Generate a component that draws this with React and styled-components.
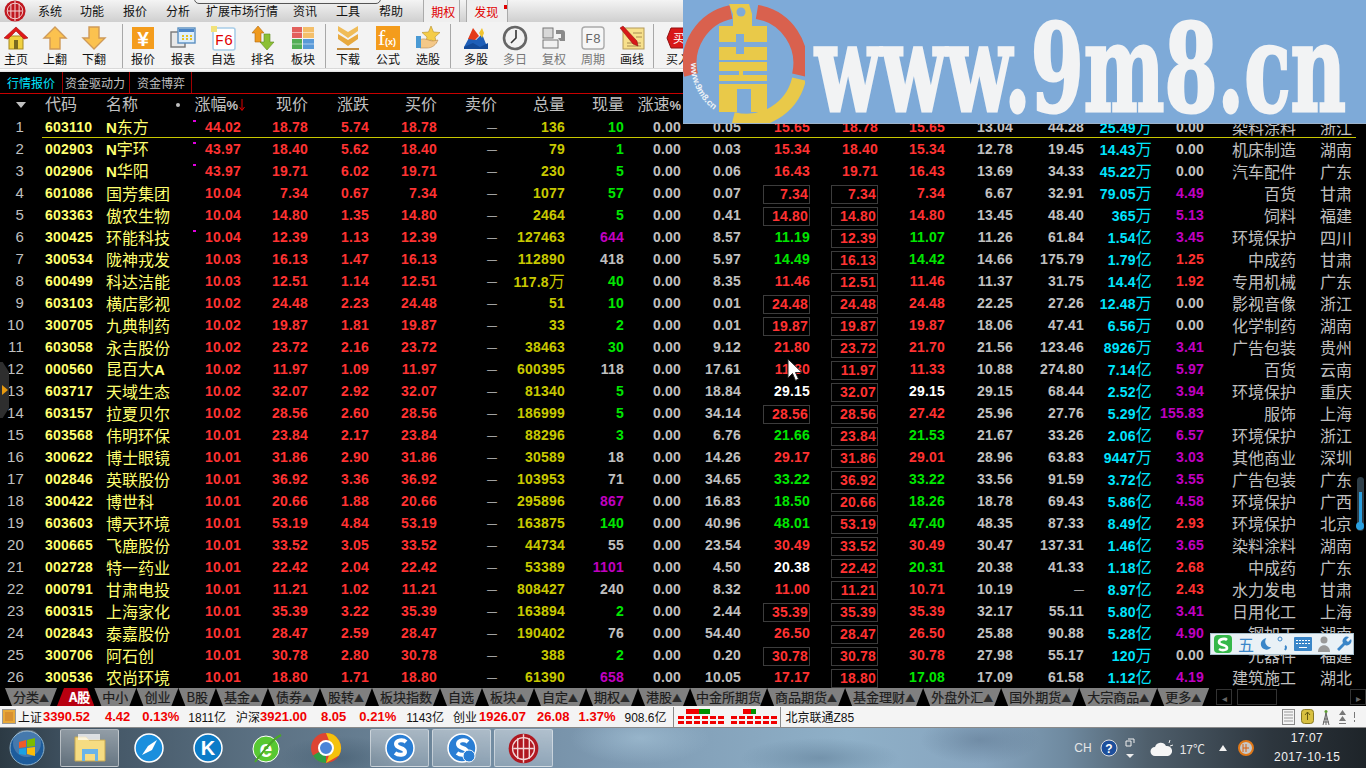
import React from "react";
import styled, { createGlobalStyle } from "styled-components";

const CJK = `"Noto Sans CJK SC", sans-serif`;
const NUM = `"Liberation Sans", "Noto Sans CJK SC", sans-serif`;
const GRAY = "#c0c0c0";
const RED = "#ff3232";
const GREEN = "#00e600";
const MAGENTA = "#c000c0";
const CYAN = "#00e5ff";

const GlobalStyle = createGlobalStyle`
    html, body {
        margin: 0;
        background: #000;
        overflow: hidden;
    }
`;

const Shell = styled.div`
    position: relative;
    width: 1366px;
    height: 768px;
    overflow: hidden;
    display: flex;
    flex-direction: column;
    background: #000;
    font-family: ${CJK};
`;

/* ---------- top menu ---------- */

const MenuBar = styled.div`
    position: relative;
    height: 22px;
    display: flex;
    align-items: center;
    background: linear-gradient(#f4f4f4, #cfcfcf);
    flex-shrink: 0;

    &::before {
        content: "";
        position: absolute;
        left: 194px;
        top: -3px;
        width: 185px;
        height: 5px;
        border: 1px solid #555;
        border-radius: 0 0 5px 5px;
    }
`;

const MenuLogo = styled.div`
    width: 38px;
    display: flex;
    padding-left: 4px;
    box-sizing: border-box;
`;

const MenuItem = styled.span`
    font-size: 12px;
    line-height: 22px;
    color: #111;
    margin-right: ${(p) => p.$gap}px;
`;

const MenuTab = styled.div`
    display: flex;
    align-items: center;
    height: 22px;
    width: ${(p) => p.$w}px;
    margin-left: ${(p) => p.$ml}px;
    padding-left: 7px;
    box-sizing: border-box;
    border-left: 1px solid #aaa;
    border-right: 1px solid #aaa;
    background: #efefef;
    font-size: 12px;
    color: #e00000;
`;

const RedDot = styled.span`
    width: 3px;
    height: 4px;
    margin: -8px 0 0 6px;
    background: #e00000;
`;

/* ---------- toolbar ---------- */

const ToolBar = styled.div`
    height: 46px;
    display: flex;
    padding-top: 2px;
    box-sizing: border-box;
    background: #f3f3f3;
    flex-shrink: 0;
`;

const ToolStrip = styled.div`
    height: 4px;
    flex-shrink: 0;
    background: linear-gradient(#c8c8c8, #fff 40%, #dcdcdc);
`;

const ToolGroup = styled.div`
    display: flex;
    gap: ${(p) => p.$gap}px;
    padding: 1px ${(p) => p.$pr}px 0 ${(p) => p.$pl}px;
    border-right: ${(p) => (p.$last ? "none" : "1px solid #a8a8a8")};
`;

const ToolButton = styled.div`
    width: 32px;
    display: flex;
    flex-direction: column;
    align-items: center;
    color: ${(p) => (p.$dim ? "#777" : "#111")};
    font-size: 12px;
    line-height: 15px;
    white-space: nowrap;
`;

const svgBox = { width: 26, height: 26, viewBox: "0 0 26 26" };

const icons = {
    home: (
        <svg {...svgBox}>
            <rect x="6" y="11" width="14" height="13" fill="#f0d040" stroke="#a88a20" />
            <polygon points="13,2 25,13 21,14 13,6 5,14 1,13" fill="#e01818" stroke="#a01010" strokeWidth=".6" />
            <rect x="11" y="15" width="4" height="9" fill="#7a6a20" />
        </svg>
    ),
    up: (
        <svg {...svgBox}>
            <polygon points="13,2 24,13 18,13 18,24 8,24 8,13 2,13" fill="#fbc24f" stroke="#cf9a58" strokeWidth="1.4" />
        </svg>
    ),
    down: (
        <svg {...svgBox}>
            <polygon points="8,2 18,2 18,13 24,13 13,24 2,13 8,13" fill="#fbc24f" stroke="#cf9a58" strokeWidth="1.4" />
        </svg>
    ),
    yuan: (
        <svg {...svgBox}>
            <rect x="2" y="2" width="22" height="22" fill="#f49c1c" />
            <text x="13" y="21" textAnchor="middle" fontFamily="Liberation Sans" fontWeight="700" fontSize="21" fill="#fff">¥</text>
        </svg>
    ),
    report: (
        <svg {...svgBox}>
            <rect x="1" y="7" width="14" height="15" fill="#e8e8e8" stroke="#777" strokeWidth="1.4" />
            <rect x="8" y="3" width="17" height="15" fill="#dceefc" stroke="#5b8fc0" strokeWidth="1.4" />
            <rect x="9" y="4" width="15" height="3" fill="#4c86c8" />
            <path d="M12 11h2M16 11h2M20 11h2M12 14h2M16 14h2M20 14h2" stroke="#e8c020" strokeWidth="2" />
        </svg>
    ),
    f6: (
        <svg {...svgBox}>
            <rect x="3" y="3" width="22" height="22" rx="2" fill="#fff" stroke="#a8cde8" strokeWidth="1.6" />
            <rect x="1" y="1" width="6" height="6" fill="#f2e27a" />
            <text x="14" y="20" textAnchor="middle" fontFamily="Liberation Mono" fontSize="15" fill="#e00000">F6</text>
        </svg>
    ),
    rank: (
        <svg {...svgBox}>
            <polygon points="8,1 14,8 11,8 11,17 5,17 5,8 2,8" fill="#ef9a1e" stroke="#b06a10" strokeWidth=".6" />
            <polygon points="14,9 20,9 20,17 24,17 17,25 10,17 14,17" fill="#8cc034" stroke="#5f8a20" strokeWidth=".6" />
        </svg>
    ),
    blocks: (
        <svg {...svgBox}>
            <rect x="2" y="2" width="10" height="11" fill="#e2605c" />
            <rect x="13" y="2" width="11" height="11" fill="#f4bf6a" />
            <rect x="2" y="14" width="10" height="10" fill="#52ae55" />
            <rect x="13" y="14" width="11" height="10" fill="#5a9ad8" />
            <path d="M2 7.5h10M2 19h10M13 7.5h11M13 19h11" stroke="#fff" strokeOpacity=".5" />
        </svg>
    ),
    download: (
        <svg {...svgBox}>
            <polygon points="3,1 13,7 23,1 23,6 13,13 3,6" fill="#f0bc58" />
            <polygon points="3,9 13,15 23,9 23,14 13,21 3,14" fill="#e8a93e" />
            <rect x="2" y="23" width="22" height="2" fill="#c89040" />
        </svg>
    ),
    fx: (
        <svg {...svgBox}>
            <rect x="1" y="1" width="24" height="24" fill="#f49c1c" />
            <text x="3" y="20" fontFamily="Liberation Serif" fontSize="22" fill="#fff">f</text>
            <text x="10" y="20" fontFamily="Liberation Sans" fontWeight="700" fontSize="9" fill="#fff">(x)</text>
        </svg>
    ),
    star: (
        <svg {...svgBox}>
            <polygon points="16,1 18.5,7 25,7.5 20,12 21.5,18 16,15 10.5,18 12,12 7,7.5 13.5,7" fill="#f4cc48" stroke="#b8902a" strokeWidth=".6" />
            <path d="M5 15c4-3 9 1 13 1l5-1c-2 5-6 8-11 8H5z" fill="#f4c888" stroke="#b88a50" strokeWidth=".6" />
            <rect x="1" y="11" width="5" height="12" fill="#4a9ad4" />
        </svg>
    ),
    multi: (
        <svg {...svgBox}>
            <polygon points="1,22 7,11 13,15 19,9 25,24 1,24" fill="#1e5fb8" />
            <polygon points="5,14 10,3 16,11 12,15" fill="#e43a1a" />
            <polygon points="16,8 19,3 21,8 19,13" fill="#f2c430" />
            <polygon points="1,22 10,18 17,22 25,18 25,24 1,24" fill="#134a98" />
        </svg>
    ),
    clock: (
        <svg {...svgBox}>
            <circle cx="13" cy="13" r="11" fill="#f2f2f2" stroke="#666" strokeWidth="2.6" />
            <path d="M14 5v8l-5 5" fill="none" stroke="#333" strokeWidth="1.6" />
        </svg>
    ),
    fq: (
        <svg {...svgBox}>
            <rect x="2" y="3" width="10" height="10" fill="#d8d8d8" stroke="#777" />
            <rect x="2" y="15" width="15" height="8" fill="#f0f0f0" stroke="#777" />
            <path d="M15 5h6a3 3 0 0 1 3 3v8h-5l-2-3h3V9h-5z" fill="#8a8a8a" />
        </svg>
    ),
    f8: (
        <svg {...svgBox}>
            <rect x="2" y="2" width="22" height="22" rx="3" fill="#f6f6f6" stroke="#aaa" strokeWidth="1.4" />
            <text x="13" y="18" textAnchor="middle" fontFamily="Liberation Mono" fontSize="13" fill="#666">F8</text>
        </svg>
    ),
    note: (
        <svg {...svgBox}>
            <rect x="4" y="3" width="21" height="21" fill="#f7e08c" stroke="#b49a58" />
            <path d="M8 18h14M8 21h14M14 8h9M17 12h6" stroke="#a88c50" />
            <polygon points="1,3 4,1 18,16 19,21 14,19" fill="#d81818" stroke="#801010" strokeWidth=".5" />
        </svg>
    ),
    buy: (
        <svg {...svgBox}>
            <polygon points="6,3 22,3 26,13 22,23 6,23 2,13" fill="#d81818" stroke="#901010" />
            <text x="14" y="18" textAnchor="middle" fontFamily={CJK} fontSize="12" fill="#fff">买</text>
        </svg>
    ),
};

const toolGroups = [
    { pl: 0, pr: 12, gap: 7, items: [["home", "主页"], ["up", "上翻"], ["down", "下翻"]] },
    { pl: 4, pr: 6, gap: 8, items: [["yuan", "报价"], ["report", "报表"], ["f6", "自选"], ["rank", "排名"], ["blocks", "板块"]] },
    { pl: 6, pr: 6, gap: 8, items: [["download", "下载"], ["fx", "公式"], ["star", "选股"]] },
    { pl: 9, pr: 5, gap: 7, items: [["multi", "多股"], ["clock", "多日", 1], ["fq", "复权", 1], ["f8", "周期", 1], ["note", "画线"]] },
    { pl: 8, pr: 0, gap: 7, last: true, items: [["buy", "买入"]] },
];

/* ---------- sheet tabs and table ---------- */

const SheetTabs = styled.div`
    height: 22px;
    box-sizing: border-box;
    display: flex;
    flex-shrink: 0;
    border-bottom: 1px solid #c80000;
`;

const SheetTab = styled.div`
    padding: 0 ${(p) => p.$pr}px 0 ${(p) => p.$pl}px;
    border-right: 1px solid #a00000;
    font-size: 12px;
    line-height: 21px;
    color: ${(p) => (p.$active ? CYAN : GRAY)};
`;

const columns = "24px 82px 84px 51px 67px 61px 68px 60px 68px 59px 57px 60px 69px 68px 67px 68px 71px 68px 52px 92px 56px";

const HeadRow = styled.div`
    display: grid;
    grid-template-columns: ${columns};
    height: 21px;
    flex-shrink: 0;
    align-items: start;
    color: ${GRAY};
    font-size: 16px;
    line-height: 19px;
`;

const HeadCell = styled.div`
    text-align: ${(p) => (p.$left ? "left" : "right")};
    padding-left: ${(p) => p.$pl || 0}px;
    white-space: nowrap;
    position: relative;
`;

const HeadPercent = styled.span`
    font-family: "Liberation Sans", sans-serif;
    font-weight: 700;
    font-size: 13px;
`;

const SortArrow = styled.svg`
    margin: 0 -4px 0 1px;
    vertical-align: -1px;
`;

const HeadDot = styled.i`
    position: absolute;
    right: 10px;
    top: 9px;
    width: 4px;
    height: 4px;
    border-radius: 50%;
    background: ${GRAY};
`;

const SortTriangle = styled.i`
    position: absolute;
    left: 16px;
    top: 8px;
    border: 5px solid transparent;
    border-bottom: none;
    border-top: 6px solid ${GRAY};
`;

const TableBody = styled.div`
    flex: 1;
    min-height: 0;
`;

const Row = styled.div`
    position: relative;
    display: grid;
    grid-template-columns: ${columns};
    height: 22px;
    align-items: center;

    ${(p) =>
        p.$selected &&
        `&::after {
            content: "";
            position: absolute;
            left: 42px;
            right: 10px;
            bottom: -1px;
            height: 1px;
            background: #c8c800;
        }`}
`;

const Num = styled.div`
    position: relative;
    text-align: right;
    font-family: ${NUM};
    font-size: 14px;
    font-weight: 700;
    letter-spacing: 0.2px;
    line-height: 22px;
    white-space: nowrap;
    color: ${(p) => p.$color || GRAY};

    ${(p) =>
        p.$mark &&
        `&::before {
            content: "";
            position: absolute;
            left: 3px;
            top: 4px;
            width: 3px;
            height: 2px;
            background: #e000e0;
        }`}
`;

const Index = styled(Num)`
    font-size: 15px;
    font-weight: 400;
`;

const Code = styled(Num)`
    text-align: left;
    padding-left: 21px;
    color: #ffff70;
`;

const Name = styled.div`
    font-family: ${CJK};
    font-size: 16px;
    line-height: 21px;
    color: #ffff70;
    white-space: nowrap;
`;

const NameLatin = styled.b`
    font-family: "Liberation Sans", sans-serif;
    font-size: 15px;
`;

const Place = styled.div`
    text-align: right;
    font-size: 16px;
    line-height: 21px;
    color: ${GRAY};
    white-space: nowrap;
`;

const Unit = styled.span`
    font-family: ${CJK};
    font-size: 16px;
    font-weight: 400;
`;

const Dash = styled.span`
    font-size: 10px;
    font-weight: 400;
    letter-spacing: 0;
`;

const Boxed = styled.span`
    display: inline-block;
    box-sizing: border-box;
    width: 47px;
    height: 19px;
    line-height: 17px;
    padding-right: 1px;
    border: 1px solid #3c3c3c;
    vertical-align: middle;
`;

const rows = [
    "603110|N东方|44.02|18.78|5.74|136|g10|0.05|15.65|18.78|15.65|13.04|44.28|25.49万|0.00|染料涂料|浙江|m",
    "002903|N宇环|43.97|18.40|5.62|79|g1|0.03|15.34|18.40|15.34|12.78|19.45|14.43万|0.00|机床制造|湖南|m",
    "002906|N华阳|43.97|19.71|6.02|230|g5|0.06|16.43|19.71|16.43|13.69|34.33|45.22万|0.00|汽车配件|广东|m",
    "601086|国芳集团|10.04|7.34|0.67|1077|g57|0.07|b7.34|b7.34|7.34|6.67|32.91|79.05万|4.49|百货|甘肃|",
    "603363|傲农生物|10.04|14.80|1.35|2464|g5|0.41|b14.80|b14.80|14.80|13.45|48.40|365万|5.13|饲料|福建|",
    "300425|环能科技|10.04|12.39|1.13|127463|m644|8.57|g11.19|b12.39|g11.07|11.26|61.84|1.54亿|3.45|环境保护|四川|m",
    "300534|陇神戎发|10.03|16.13|1.47|112890|418|5.97|g14.49|b16.13|g14.42|14.66|175.79|1.79亿|1.25|中成药|甘肃|",
    "600499|科达洁能|10.03|12.51|1.14|117.8万|g40|8.35|11.46|b12.51|11.46|11.37|31.75|14.4亿|1.92|专用机械|广东|",
    "603103|横店影视|10.02|24.48|2.23|51|g10|0.01|b24.48|b24.48|24.48|22.25|27.26|12.48万|0.00|影视音像|浙江|",
    "300705|九典制药|10.02|19.87|1.81|33|g2|0.01|b19.87|b19.87|19.87|18.06|47.41|6.56万|0.00|化学制药|湖南|",
    "603058|永吉股份|10.02|23.72|2.16|38463|g30|9.12|21.80|b23.72|21.70|21.56|123.46|8926万|3.41|广告包装|贵州|",
    "000560|昆百大A|10.02|11.97|1.09|600395|118|17.61|11.80|b11.97|11.33|10.88|274.80|7.14亿|5.97|百货|云南|",
    "603717|天域生态|10.02|32.07|2.92|81340|g5|18.84|w29.15|b32.07|w29.15|29.15|68.44|2.52亿|3.94|环境保护|重庆|",
    "603157|拉夏贝尔|10.02|28.56|2.60|186999|g5|34.14|b28.56|b28.56|27.42|25.96|27.76|5.29亿|155.83|服饰|上海|",
    "603568|伟明环保|10.01|23.84|2.17|88296|g3|6.76|g21.66|b23.84|g21.53|21.67|33.26|2.06亿|6.57|环境保护|浙江|",
    "300622|博士眼镜|10.01|31.86|2.90|30589|18|14.26|29.17|b31.86|29.01|28.96|63.83|9447万|3.03|其他商业|深圳|",
    "002846|英联股份|10.01|36.92|3.36|103953|71|34.65|g33.22|b36.92|g33.22|33.56|91.59|3.72亿|3.55|广告包装|广东|",
    "300422|博世科|10.01|20.66|1.88|295896|m867|16.83|g18.50|b20.66|g18.26|18.78|69.43|5.86亿|4.58|环境保护|广西|",
    "603603|博天环境|10.01|53.19|4.84|163875|g140|40.96|g48.01|b53.19|g47.40|48.35|87.33|8.49亿|2.93|环境保护|北京|",
    "300665|飞鹿股份|10.01|33.52|3.05|44734|55|23.54|30.49|b33.52|30.49|30.47|137.31|1.46亿|3.65|染料涂料|湖南|",
    "002728|特一药业|10.01|22.42|2.04|53389|m1101|4.50|w20.38|b22.42|g20.31|20.38|41.33|1.18亿|2.68|中成药|广东|",
    "000791|甘肃电投|10.01|11.21|1.02|808427|240|8.32|11.00|b11.21|10.71|10.19|—|8.97亿|2.43|水力发电|甘肃|",
    "600315|上海家化|10.01|35.39|3.22|163894|g2|2.44|b35.39|b35.39|35.39|32.17|55.11|5.80亿|3.41|日用化工|上海|",
    "002843|泰嘉股份|10.01|28.47|2.59|190402|76|54.40|26.50|b28.47|26.50|25.88|90.88|5.28亿|4.90|钢加工|湖南|",
    "300706|阿石创|10.01|30.78|2.80|388|g2|0.20|b30.78|b30.78|30.78|27.98|55.17|120万|0.00|元器件|福建|",
    "300536|农尚环境|10.01|18.80|1.71|61390|m658|10.05|17.17|b18.80|g17.08|17.09|61.58|1.12亿|4.19|建筑施工|湖北|",
].map((line) => line.split("|"));

const withUnit = (text) => {
    const match = text.match(/^(.*?)([万亿])$/);
    return match ? <>{match[1]}<Unit>{match[2]}</Unit></> : text;
};

const withLatin = (text) =>
    text.split(/([A-Z])/).map((part, i) => (/^[A-Z]$/.test(part) ? <NameLatin key={i}>{part}</NameLatin> : part));

const prefixed = (raw) => {
    const kind = raw[0];
    if (kind === "b") return { value: raw.slice(1), color: RED, boxed: true };
    if (kind === "g") return { value: raw.slice(1), color: GREEN };
    if (kind === "w") return { value: raw.slice(1), color: "#fff" };
    if (kind === "m") return { value: raw.slice(1), color: MAGENTA };
    return { value: raw };
};

const PriceCell = ({ raw }) => {
    const cell = prefixed(raw);
    return (
        <Num $color={cell.color || RED}>
            {cell.boxed ? <Boxed>{cell.value}</Boxed> : cell.value}
        </Num>
    );
};

const ratioColor = (v) => {
    const n = parseFloat(v);
    if (n === 0) return GRAY;
    return n >= 3 ? MAGENTA : RED;
};

const headers = ["现价", "涨跌", "买价", "卖价", "总量", "现量"];
const hiddenHeaders = ["换手", "今开", "最高", "最低", "昨收", "市盈(动)", "总金额", "量比", "细分行业", "地区"];

/* ---------- overlays ---------- */

const Watermark = styled.div`
    position: absolute;
    left: 683px;
    top: 0;
    width: 683px;
    height: 124px;
    display: flex;
    align-items: center;
    overflow: hidden;
    background: #7eaad8;
    border-bottom: 1px solid #9db4cc;
    box-sizing: border-box;
`;

const WatermarkText = styled.div`
    font-family: "DejaVu Serif", serif;
    font-weight: 700;
    font-size: 122px;
    line-height: 124px;
    color: #f2f3f4;
    -webkit-text-stroke: 3px #f2f3f4;
    white-space: nowrap;
    transform-origin: left center;
    transform: translateY(6px) scaleX(0.625);
    margin-left: 10px;
`;

const SideHandle = styled.div`
    position: absolute;
    left: 0;
    top: 362px;
    width: 9px;
    height: 56px;
    background: #2e2e2e;
    clip-path: polygon(0 0, 30% 0, 100% 18%, 100% 82%, 30% 100%, 0 100%);
    display: flex;
    align-items: center;

    &::after {
        content: "";
        border: 5px solid transparent;
        border-right: none;
        border-left: 6px solid #e89a10;
        margin-left: 2px;
    }
`;

const ImeBar = styled.div`
    position: absolute;
    left: 1210px;
    top: 633px;
    width: 144px;
    height: 22px;
    box-sizing: border-box;
    border: 1px solid #a9c0cc;
    background: #e9f1f6;
    display: flex;
    align-items: center;
    gap: 5px;
    padding-left: 2px;
`;

const ImeLabel = styled.span`
    font-size: 16px;
    color: #3a86c8;
    line-height: 20px;
`;

const VolumeSlider = styled.div`
    position: absolute;
    left: 1357px;
    top: 477px;
    width: 7px;
    height: 54px;
    border-radius: 4px;
    background: #2e3e48;
    display: flex;
    justify-content: center;

    &::before {
        content: "";
        width: 3px;
        height: 33px;
        margin-top: 15px;
        background: #2aa0e0;
    }

    &::after {
        content: "";
        position: absolute;
        left: -1px;
        bottom: 1px;
        width: 8px;
        height: 8px;
        border-radius: 50%;
        background: #2aa0e0;
    }
`;

const Pointer = styled.svg`
    position: absolute;
    left: 787px;
    top: 358px;
`;

/* ---------- bottom tabs ---------- */

const TabBar = styled.div`
    height: 18px;
    margin-top: 2px;
    padding-left: 5px;
    display: flex;
    flex-shrink: 0;
`;

const MarketTab = styled.div`
    padding: ${(p) => (p.$active ? "0 4px 0 12px" : p.$narrow ? "0 6px" : "0 8px")};
    height: 18px;
    background: ${(p) => (p.$active ? "#b80010" : "#808080")};
    color: ${(p) => (p.$active ? "#fff" : "#1c1c1c")};
    font-size: 13px;
    font-weight: ${(p) => (p.$active ? 700 : 400)};
    -webkit-text-stroke: 0.2px currentColor;
    line-height: 18px;
    white-space: nowrap;
    clip-path: ${(p) =>
        p.$active
            ? "polygon(7px 0, calc(100% - 7px) 0, 100% 100%, 0 100%)"
            : "polygon(0 0, 100% 0, calc(100% - 7px) 100%, 7px 100%)"};
`;

const TabArrow = styled.span`
    font-size: 10px;
    color: #2a2a2a;
`;

const TabScroll = styled.div`
    margin-left: auto;
    width: 150px;
    display: flex;
    align-items: center;
    justify-content: space-between;
    color: #666;
    font-size: 10px;
`;

const ScrollThumb = styled.div`
    width: 40px;
    height: 16px;
    margin-right: auto;
    margin-left: 5px;
    background: #000;
    border: 1px solid #333;
    box-sizing: border-box;
`;

const ScrollEnd = styled.div`
    width: 16px;
    height: 16px;
    line-height: 16px;
    text-align: center;
    border: 1px solid #333;
    box-sizing: border-box;
`;

/* ---------- status bar ---------- */

const StatusBar = styled.div`
    height: 22px;
    display: flex;
    align-items: center;
    flex-shrink: 0;
    background: #f4f4f4;
    border-bottom: 1px solid #8a8a8a;
    box-sizing: border-box;
    color: #111;
`;

const StatusIcon = styled.div`
    width: 12px;
    height: 13px;
    margin: 0 3px 0 3px;
    box-sizing: border-box;
    border: 2px solid #e8a838;
    background: #d89030;
    outline: 1px solid #999;
`;

const Quote = styled.span`
    font-family: ${NUM};
    font-weight: 700;
    font-size: 13px;
    color: #f00000;
    white-space: nowrap;
    margin-right: ${(p) => p.$gap}px;
`;

const StatusText = styled.span`
    font-family: ${NUM};
    white-space: nowrap;
    font-size: 12px;
    margin-right: ${(p) => p.$gap || 0}px;
`;

const StatusDivider = styled.i`
    width: 1px;
    height: 20px;
    margin: 0 ${(p) => p.$r}px 0 ${(p) => p.$l}px;
    background: #8a8a8a;
`;

const DashGap = styled.i`
    width: 5px;
`;

const StatusTray = styled.div`
    margin-left: auto;
    margin-right: 10px;
    display: flex;
    align-items: center;
    gap: 6px;
`;

/* ---------- taskbar ---------- */

const TaskBar = styled.div`
    height: 40px;
    flex-shrink: 0;
    display: flex;
    align-items: center;
    background:
        radial-gradient(ellipse 60px 22px at 340px 30px, rgba(60, 85, 105, 0.5), transparent),
        radial-gradient(ellipse 70px 26px at 640px 10px, rgba(170, 200, 220, 0.55), transparent),
        radial-gradient(ellipse 80px 20px at 820px 30px, rgba(95, 125, 150, 0.55), transparent),
        radial-gradient(ellipse 60px 24px at 980px 12px, rgba(90, 115, 140, 0.5), transparent),
        linear-gradient(90deg, #2c3a44 0, #3f5160 5%, #5d7385 20%, #7e9ab2 45%, #8fb0c8 62%, #87a5bf 72%, #6f8aa0 78%, #4f5f6c 84%, #2d363e 93%, #1e2429 100%);
`;

const StartOrb = styled.div`
    width: 60px;
    display: flex;
    justify-content: center;
    padding-right: 7px;
    box-sizing: border-box;
`;

const TaskButton = styled.div`
    width: 59px;
    height: 38px;
    margin-right: ${(p) => p.$gap || 0}px;
    display: flex;
    align-items: center;
    justify-content: center;
    box-sizing: border-box;
    border-radius: 2px;
    ${(p) =>
        p.$open &&
        `background: linear-gradient(rgba(255,255,255,.42), rgba(255,255,255,.18));
         border: 1px solid rgba(255,255,255,.45);`}
`;

const Tray = styled.div`
    margin-left: auto;
    display: flex;
    align-items: center;
    color: #e6e6e6;
    font-size: 12px;
`;

const TrayText = styled.span`
    font-family: "Liberation Sans", "Noto Sans CJK SC", sans-serif;
    margin-left: ${(p) => p.$ml || 0}px;
    white-space: nowrap;
`;

const TraySvg = styled.svg`
    margin-left: ${(p) => p.$ml}px;
`;

const Clock = styled.div`
    width: 66px;
    margin-left: 20px;
    padding-right: 26px;
    text-align: center;
    font-family: "Liberation Sans", sans-serif;
    font-size: 12px;
    letter-spacing: 0.5px;
    line-height: 19px;
    white-space: nowrap;
    color: #f2f2f2;
`;

const CiticLogo = ({ size, ring = "#c01820" }) => (
    <svg width={size} height={size} viewBox="0 0 24 24">
        <circle cx="12" cy="12" r="11.5" fill={ring} />
        <circle cx="12" cy="12" r="8.5" fill="none" stroke="#f3d6d6" strokeWidth="1" />
        <path d="M12 1v22M7.5 4v16M16.5 4v16M4 12h16" stroke="#f3d6d6" strokeWidth="1.1" />
    </svg>
);

const BlueBall = ({ children, color = "#1b8fdd" }) => (
    <svg width="30" height="30" viewBox="0 0 30 30">
        <circle cx="15" cy="15" r="14" fill={color} stroke="#fff" strokeWidth="1.5" />
        {children}
    </svg>
);

const DashRows = ({ w, a, b }) => (
    <svg width={w} height="20" viewBox={`0 0 ${w} 20`}>
        <rect x={a[0]} y="2" width={a[1]} height="5" fill="#f00000" />
        <rect x={a[0] + a[1]} y="2" width={b} height="5" fill="#009000" />
        <path d={`M0 10.5H${w}M0 15.5H${w}`} stroke="#f00000" strokeWidth="3" strokeDasharray="6 2" />
    </svg>
);

const tabs = [
    ["分类", 1], ["A股", 0, 1], ["中小"], ["创业"], ["B股"], ["基金", 1], ["债券", 1], ["股转", 1], ["板块指数"], ["自选"],
    ["板块", 1], ["自定", 1], ["期权", 1], ["港股", 1], ["中金所期货", 0, 0, 1], ["商品期货", 1], ["基金理财", 1], ["外盘外汇", 1], ["国外期货", 1], ["大宗商品", 1], ["更多", 1],
];

const App = () => (
    <Shell>
        <GlobalStyle />

        <MenuBar>
            <MenuLogo><CiticLogo size={22} /></MenuLogo>
            <MenuItem $gap={18}>系统</MenuItem>
            <MenuItem $gap={19}>功能</MenuItem>
            <MenuItem $gap={19}>报价</MenuItem>
            <MenuItem $gap={16}>分析</MenuItem>
            <MenuItem $gap={15}>扩展市场行情</MenuItem>
            <MenuItem $gap={19}>资讯</MenuItem>
            <MenuItem $gap={19}>工具</MenuItem>
            <MenuItem $gap={0}>帮助</MenuItem>
            <MenuTab $w={37} $ml={20}>期权</MenuTab>
            <MenuTab $w={42} $ml={6}>发现<RedDot /></MenuTab>
        </MenuBar>

        <ToolBar>
            {toolGroups.map((group, i) => (
                <ToolGroup key={i} $gap={group.gap} $pl={group.pl} $pr={group.pr} $last={group.last}>
                    {group.items.map(([icon, label, dim]) => (
                        <ToolButton key={label} $dim={dim}>
                            {icons[icon]}
                            {label}
                        </ToolButton>
                    ))}
                </ToolGroup>
            ))}
        </ToolBar>
        <ToolStrip />

        <SheetTabs>
            <SheetTab $active $pl={7} $pr={7}>行情报价</SheetTab>
            <SheetTab $pl={2} $pr={4}>资金驱动力</SheetTab>
            <SheetTab $pl={7} $pr={6}>资金博弈</SheetTab>
        </SheetTabs>

        <HeadRow>
            <HeadCell $left><SortTriangle /></HeadCell>
            <HeadCell $left $pl={21}>代码</HeadCell>
            <HeadCell $left>名称<HeadDot /></HeadCell>
            <HeadCell>
                涨幅<HeadPercent>%</HeadPercent>
                <SortArrow width="6" height="12" viewBox="0 0 6 12"><path d="M3 0v11M0.500 8L3 11.500 5.500 8" fill="none" stroke="#e00000" /></SortArrow>
            </HeadCell>
            {headers.map((h) => <HeadCell key={h}>{h}</HeadCell>)}
            <HeadCell>涨速<HeadPercent>%</HeadPercent></HeadCell>
            {hiddenHeaders.map((h) => <HeadCell key={h}>{h}</HeadCell>)}
        </HeadRow>

        <TableBody>
            {rows.map((r, i) => (
                <Row key={r[0]} $selected={i === 0}>
                    <Index>{i + 1}</Index>
                    <Code>{r[0]}</Code>
                    <Name>{withLatin(r[1])}</Name>
                    <Num $color={RED} $mark={r[17] === "m"}>{r[2]}</Num>
                    <Num $color={RED}>{r[3]}</Num>
                    <Num $color={RED}>{r[4]}</Num>
                    <Num $color={RED}>{r[3]}</Num>
                    <Num><Dash>—</Dash></Num>
                    <Num $color="#c8c800">{withUnit(r[5])}</Num>
                    <Num $color={prefixed(r[6]).color}>{prefixed(r[6]).value}</Num>
                    <Num>0.00</Num>
                    <Num>{r[7]}</Num>
                    <PriceCell raw={r[8]} />
                    <PriceCell raw={r[9]} />
                    <PriceCell raw={r[10]} />
                    <Num>{r[11]}</Num>
                    <Num>{r[12] === "—" ? <Dash>—</Dash> : r[12]}</Num>
                    <Num $color={CYAN}>{withUnit(r[13])}</Num>
                    <Num $color={ratioColor(r[14])}>{r[14]}</Num>
                    <Place>{r[15]}</Place>
                    <Place>{r[16]}</Place>
                </Row>
            ))}
        </TableBody>

        <TabBar>
            {tabs.map(([label, arrow, active, narrow]) => (
                <MarketTab key={label} $active={active} $narrow={narrow}>
                    {label}
                    {arrow ? <TabArrow>▲</TabArrow> : null}
                </MarketTab>
            ))}
            <TabScroll>
                <ScrollEnd>◂</ScrollEnd>
                <ScrollThumb />
                <ScrollEnd>▸</ScrollEnd>
            </TabScroll>
        </TabBar>

        <StatusBar>
            <StatusIcon />
            <StatusText $gap={1}>上证</StatusText>
            <Quote $gap={15}>3390.52</Quote>
            <Quote $gap={12}>4.42</Quote>
            <Quote $gap={9}>0.13%</Quote>
            <StatusText $gap={10}>1811亿</StatusText>
            <StatusText>沪深</StatusText>
            <Quote $gap={14}>3921.00</Quote>
            <Quote $gap={13}>8.05</Quote>
            <Quote $gap={10}>0.21%</Quote>
            <StatusText $gap={9}>1143亿</StatusText>
            <StatusText $gap={2}>创业</StatusText>
            <Quote $gap={11}>1926.07</Quote>
            <Quote $gap={9}>26.08</Quote>
            <Quote $gap={9}>1.37%</Quote>
            <StatusText>908.6亿</StatusText>
            <StatusDivider $l={6} $r={4} />
            <DashRows w={48} a={[8, 13]} b={11} />
            <DashGap />
            <DashRows w={46} a={[12, 8]} b={5} />
            <StatusDivider $l={3} $r={5} />
            <StatusText>北京联通Z85</StatusText>
            <StatusTray>
                <svg width="13" height="16" viewBox="0 0 13 16"><rect x=".5" y=".5" width="12" height="15" fill="#f4f4f4" stroke="#888" /><path d="M2 3h9M2 6h9M2 9h9M2 12h9" stroke="#999" /></svg>
                <svg width="13" height="15" viewBox="0 0 13 15"><rect x=".5" y=".5" width="12" height="14" rx="3" fill="#d8c040" stroke="#887820" /><path d="M6.5 3v8M4 6l2.5-3L9 6" fill="none" stroke="#665a10" /></svg>
                <svg width="12" height="18" viewBox="0 0 12 18"><path d="M6 5v12M3 17l3-12 3 12M4 11h4M3 14h6" fill="none" stroke="#666" /><circle cx="6" cy="3.5" r="1.5" fill="#5a9a30" /></svg>
                <svg width="9" height="16" viewBox="0 0 9 16"><path d="M4.500 1L8 6H1zM4.500 7L8 12H1z" fill="#777" /><path d="M1 14.500h7" stroke="#777" /></svg>
                <svg width="3" height="12" viewBox="0 0 3 12"><path d="M1.500 1v6M1.500 9v2" stroke="#777" /></svg>
            </StatusTray>
        </StatusBar>

        <TaskBar>
            <StartOrb>
                <svg width="36" height="36" viewBox="0 0 36 36">
                    <circle cx="18" cy="18" r="17" fill="#1d5c9c" stroke="#8db2cc" />
                    <circle cx="18" cy="13" r="14" fill="#fff" opacity=".18" />
                    <path d="M10 12l7-2v7l-7 1z" fill="#f05a28" />
                    <path d="M18 10l8-2v8l-8 1z" fill="#7cbb00" />
                    <path d="M10 19l7-1v7l-7-1z" fill="#1ba1e2" />
                    <path d="M18 18l8-1v9l-8-2z" fill="#fbbc09" />
                </svg>
            </StartOrb>
            <TaskButton $open>
                <svg width="36" height="32" viewBox="0 0 36 32">
                    <path d="M3 5h11l3 3h16v21H3z" fill="#f6dc82" stroke="#c8a850" />
                    <rect x="6" y="2" width="22" height="6" fill="#fff" opacity=".7" />
                    <path d="M10 17h16v12h-3v-7H13v7h-3z" fill="#6ab4e8" />
                </svg>
            </TaskButton>
            <TaskButton>
                <BlueBall><path d="M8 22L14 13l9-6-5 10z" fill="#fff" /></BlueBall>
            </TaskButton>
            <TaskButton>
                <BlueBall color="#0b7cc8">
                    <text x="15" y="22" textAnchor="middle" fontFamily="Liberation Sans" fontWeight="700" fontSize="20" fill="#fff">K</text>
                </BlueBall>
            </TaskButton>
            <TaskButton>
                <svg width="32" height="32" viewBox="0 0 32 32">
                    <circle cx="15" cy="17" r="13" fill="#58c832" stroke="#fff" />
                    <text x="15" y="25" textAnchor="middle" fontFamily="Liberation Sans" fontWeight="700" fontSize="23" fill="#fff">e</text>
                    <path d="M4 30C12 20 20 8 30 3" fill="none" stroke="#4aa828" strokeWidth="2" />
                </svg>
            </TaskButton>
            <TaskButton $gap={15}>
                <svg width="32" height="32" viewBox="0 0 32 32">
                    <circle cx="16" cy="16" r="15" fill="#dd4433" />
                    <path d="M16 16L3 23.500A15 15 0 0 0 16 31z" fill="#2f9e44" />
                    <path d="M16 1h0A15 15 0 0 1 29 23.500L16 31l6-15z" fill="#f4c20d" />
                    <circle cx="16" cy="16" r="7" fill="#4a84d8" stroke="#fff" strokeWidth="2" />
                </svg>
            </TaskButton>
            <TaskButton $open $gap={3}>
                <BlueBall color="#2a7ed4"><path d="M21 9c-3-3-10-2-10 2 0 5 9 3 9 8 0 3-6 4-10 1" fill="none" stroke="#fff" strokeWidth="4" /></BlueBall>
            </TaskButton>
            <TaskButton $open $gap={3}>
                <BlueBall color="#2a7ed4"><path d="M21 9c-3-3-10-2-10 2 0 5 9 3 9 8 0 3-6 4-10 1" fill="none" stroke="#fff" strokeWidth="4" /><circle cx="22" cy="23" r="6" fill="#2a7ed4" stroke="#fff" /></BlueBall>
            </TaskButton>
            <TaskButton $open>
                <CiticLogo size={31} ring="#b01820" />
            </TaskButton>
            <Tray>
                <TrayText>CH</TrayText>
                <TraySvg $ml={8} width="18" height="18" viewBox="0 0 18 18">
                    <circle cx="9" cy="9" r="8" fill="#1d4f9c" stroke="#ddd" />
                    <text x="9" y="14" textAnchor="middle" fontFamily="Liberation Sans" fontWeight="700" fontSize="12" fill="#fff">?</text>
                </TraySvg>
                <TraySvg $ml={6} width="12" height="24" viewBox="0 0 12 24">
                    <path d="M2 5h5v5H2zM4 3h6v4" fill="none" stroke="#eee" />
                    <path d="M2 18h8l-4 4z" fill="#eee" />
                </TraySvg>
                <TraySvg $ml={14} width="24" height="20" viewBox="0 0 24 20">
                    <path d="M5 18a4.500 4.500 0 0 1 0-9 6 6 0 0 1 11-1 5 5 0 0 1 2 10z" fill="#f6f6f6" />
                    <path d="M20 2l-1 3M23 7l-3 1" stroke="#eee" />
                </TraySvg>
                <TrayText $ml={6}>17℃</TrayText>
                <TraySvg $ml={13} width="10" height="8" viewBox="0 0 10 8"><path d="M5 1l4 6H1z" fill="#f2f2f2" /></TraySvg>
                <TraySvg $ml={10} width="16" height="18" viewBox="0 0 16 18">
                    <circle cx="8" cy="9" r="7" fill="#c8c8c8" stroke="#e07818" strokeWidth="2" />
                    <path d="M5 5v8M8 5v8M5 9h6" stroke="#d86010" />
                </TraySvg>
                <Clock>17:07<br />2017-10-15</Clock>
            </Tray>
        </TaskBar>

        <Watermark>
            <svg width="122" height="122" viewBox="0 0 122 122" style={{ flexShrink: 0 }}>
                <defs>
                    <path id="logoArc" d="M8 62A56 56 0 0 0 50 118" />
                </defs>
                <path d="M8 74A52 52 0 0 1 48 11" fill="none" stroke="#d9614e" strokeWidth="14" />
                <path d="M74 11A52 52 0 0 1 116 74" fill="none" stroke="#d9614e" strokeWidth="14" />
                <path d="M116 78A54 54 0 0 1 50 118" fill="none" stroke="#e9c949" strokeWidth="14" />
                <path d="M46 3h20l3 10v12h15v34H36V25h14V13z" fill="#e9c949" />
                <circle cx="58" cy="11" r="4.500" fill="#7eaad8" />
                <path d="M36 41h17v-8h8v8h23v5H61v7h-8v-7H36z" fill="#7eaad8" />
                <path d="M36 61h48v50H68V88H54v23H36z" fill="#e9c949" />
                <path d="M36 70h20v4H36zM60 70h24v4H60zM36 80h48v3H36z" fill="#7eaad8" />
                <text fontFamily="Liberation Sans" fontWeight="700" fontSize="9" fill="#eef2f6">
                    <textPath href="#logoArc">www.9m8.cn</textPath>
                </text>
            </svg>
            <WatermarkText>www.9m8.cn</WatermarkText>
        </Watermark>

        <SideHandle />
        <VolumeSlider />

        <ImeBar>
            <svg width="20" height="20" viewBox="0 0 20 20">
                <rect x="1" y="1" width="18" height="18" rx="4" fill="#34b84a" />
                <path d="M14 6c-2-2-8-1-8 2 0 4 8 2 8 6 0 2-5 3-8 1" fill="none" stroke="#fff" strokeWidth="2.600" />
            </svg>
            <ImeLabel>五</ImeLabel>
            <svg width="13" height="18" viewBox="0 0 16 18"><path d="M9 2a7 7 0 1 0 6 11A7 7 0 0 1 9 2z" fill="#3a86c8" /></svg>
            <svg width="12" height="18" viewBox="0 0 12 18"><circle cx="3" cy="4" r="2" fill="none" stroke="#3a86c8" /><path d="M8 11q2 1 0 4" fill="none" stroke="#3a86c8" strokeWidth="2" /></svg>
            <svg width="18" height="14" viewBox="0 0 18 14"><rect width="18" height="14" rx="1" fill="#3a86c8" /><path d="M2 3.500h14M2 6.500h14" stroke="#fff" strokeDasharray="2 1" /><path d="M5 10.500h8" stroke="#fff" /></svg>
            <svg width="14" height="16" viewBox="0 0 14 16"><circle cx="7" cy="4" r="3.500" fill="#999" /><path d="M1 16c0-9 12-9 12 0z" fill="#999" /></svg>
            <svg width="16" height="16" viewBox="0 0 16 16"><path d="M15 3l-3 3-2-2 3-3a4.500 4.500 0 0 0-6 6L1 13l2 2 6-6a4.500 4.500 0 0 0 6-6z" fill="#3a86c8" /></svg>
        </ImeBar>

        <Pointer width="16" height="24" viewBox="0 0 16 24">
            <path d="M1 1v19l4.500-4.500 3 7 3-1.500-3-6.500H15z" fill="#fff" stroke="#222" />
        </Pointer>
    </Shell>
);

export default App;
